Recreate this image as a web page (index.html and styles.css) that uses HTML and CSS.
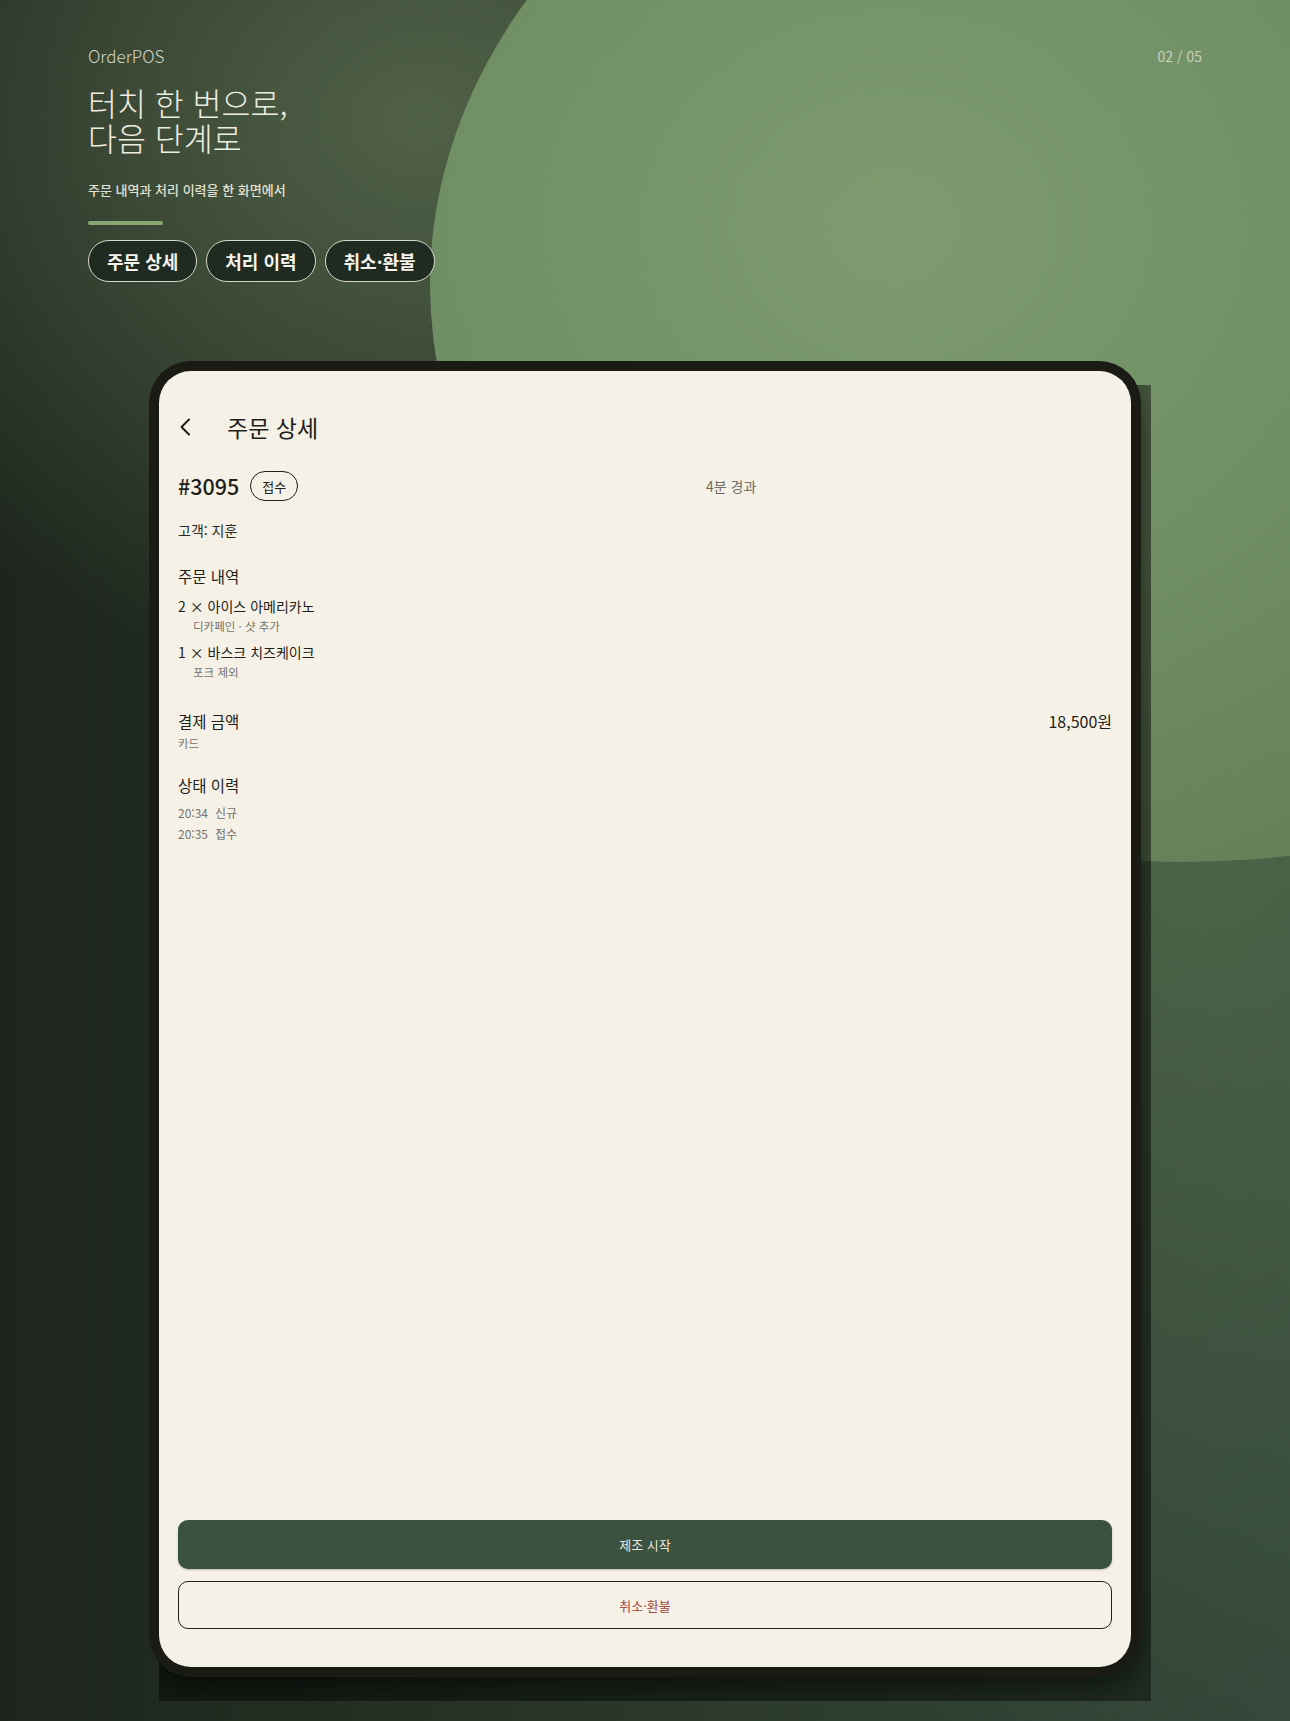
FILE: index.html
```html
<!DOCTYPE html>
<html lang="ko">
<head>
<meta charset="utf-8">
<title>OrderPOS</title>
<link rel="stylesheet" href="styles.css">
</head>
<body>
<div class="page">
  <div class="blob"></div>

  <header class="hero">
    <div class="topbar">
      <span class="brand">OrderPOS</span>
      <span class="counter">02 / 05</span>
    </div>
    <h1 class="headline">터치 한 번으로,<br>다음 단계로</h1>
    <p class="subtitle">주문 내역과 처리 이력을 한 화면에서</p>
    <div class="accent"></div>
    <div class="pills">
      <span class="pill">주문 상세</span>
      <span class="pill">처리 이력</span>
      <span class="pill">취소·환불</span>
    </div>
  </header>

  <div class="device-wrap">
    <div class="device-shadow"><div class="device-shadow-inner"></div></div>
    <div class="device">
      <div class="screen">
        <div class="nav">
          <svg class="back" width="14" height="18" viewBox="0 0 14 18" fill="none">
            <path d="M11 1.5 L3.5 9 L11 16.5" stroke="#1e1e1a" stroke-width="2" stroke-linecap="round" stroke-linejoin="round"/>
          </svg>
          <span class="nav-title">주문 상세</span>
        </div>

        <div class="order-head">
          <div class="order-id">
            <span class="order-no">#3095</span>
            <span class="badge">접수</span>
          </div>
          <span class="elapsed">4분 경과</span>
        </div>

        <div class="customer">고객: 지훈</div>

        <div class="section-title sec-items">주문 내역</div>
        <div class="item first">
          <div class="item-name">2 × 아이스 아메리카노</div>
          <div class="item-opt">디카페인 · 샷 추가</div>
        </div>
        <div class="item">
          <div class="item-name">1 × 바스크 치즈케이크</div>
          <div class="item-opt">포크 제외</div>
        </div>

        <div class="pay-row">
          <span class="section-title">결제 금액</span>
          <span class="amount">18,500원</span>
        </div>
        <div class="pay-method">카드</div>

        <div class="section-title sec-history">상태 이력</div>
        <ul class="history">
          <li><span class="time">20:34</span><span>신규</span></li>
          <li><span class="time">20:35</span><span>접수</span></li>
        </ul>

        <div class="actions">
          <button class="btn btn-primary">제조 시작</button>
          <button class="btn btn-outline">취소·환불</button>
        </div>
      </div>
    </div>
  </div>
</div>
</body>
</html>
```

FILE: styles.css
```css
* { box-sizing: border-box; }

html, body {
  margin: 0;
  padding: 0;
}

body {
  font-family: "Noto Sans CJK KR", "Noto Sans", sans-serif;
  background: #1f291f;
}

.page {
  position: relative;
  width: 1290px;
  height: 1721px;
  overflow: hidden;
  background:
    radial-gradient(ellipse 700px 560px at 420px 120px, rgba(82, 100, 73, 0.95) 0%, rgba(82, 100, 73, 0) 100%),
    radial-gradient(ellipse 760px 1000px at 1200px 800px, rgba(78, 103, 72, 0.95) 0%, rgba(78, 103, 72, 0) 100%),
    linear-gradient(90deg, #1d251c 0%, #222c21 20%, #2b3a2c 55%, #32463a 100%);
}

.blob {
  position: absolute;
  left: 430px;
  top: -294px;
  width: 1500px;
  height: 1156px;
  border-radius: 50%;
  background: radial-gradient(ellipse 55% 60% at 31% 45%, #7d9b6f 0%, #718f65 55%, #64815a 100%);
}

.hero {
  position: relative;
  z-index: 1;
  padding: 44px 88px 0;
}

.topbar {
  display: flex;
  justify-content: space-between;
  align-items: center;
  height: 24px;
}

.brand {
  font-size: 17px;
  font-weight: 300;
  color: #d3d6c9;
  line-height: 24px;
}

.counter {
  font-size: 14px;
  color: #c8d2bd;
  line-height: 24px;
}

.headline {
  margin: 17px 0 0;
  font-size: 31.5px;
  line-height: 35px;
  font-weight: 300;
  color: #efece2;
}

.subtitle {
  margin: 26px 0 0;
  font-size: 13px;
  line-height: 18px;
  font-weight: 500;
  color: #e2e0d4;
}

.accent {
  margin-top: 22px;
  width: 75px;
  height: 4px;
  border-radius: 2px;
  background: #86a874;
}

.pills {
  display: flex;
  gap: 9px;
  margin-top: 15px;
}

.pill {
  display: inline-flex;
  align-items: center;
  justify-content: center;
  height: 42px;
  padding: 0 18px;
  border: 1px solid #d8d6c8;
  border-radius: 21px;
  background: #1f2a21;
  color: #f4f2ea;
  font-size: 18px;
  font-weight: 700;
}

.device-wrap {
  position: relative;
  z-index: 1;
  width: 992px;
  height: 1316px;
  margin: 79px auto 0;
}

.device-shadow {
  position: absolute;
  left: 10px;
  top: 24px;
  width: 992px;
  height: 1316px;
  overflow: hidden;
  background: rgba(0, 0, 0, 0.38);
}

.device-shadow-inner {
  position: absolute;
  left: -10px;
  top: -24px;
  width: 992px;
  height: 1316px;
  border-radius: 42px;
  box-shadow: 0 10px 30px rgba(0, 0, 0, 0.55);
}

.device {
  position: relative;
  height: 100%;
  padding: 10px;
  border-radius: 42px;
  background: #1a1b14;
}

.screen {
  height: 100%;
  border-radius: 32px;
  background: #f5f1e7;
  padding: 34px 19px 38px;
  display: flex;
  flex-direction: column;
  color: #1e1e1a;
}

.nav {
  display: flex;
  align-items: center;
  height: 44px;
}

.back {
  display: block;
  flex: none;
}

.nav-title {
  margin-left: 35px;
  font-size: 23px;
  line-height: 30px;
  color: #1e1e1a;
}

.order-head {
  display: grid;
  grid-template-columns: 528px auto;
  align-items: center;
  height: 30px;
  margin-top: 22px;
}

.order-id {
  display: flex;
  align-items: center;
  gap: 11px;
}

.order-no {
  font-size: 21.5px;
  font-weight: 500;
  line-height: 30px;
}

.badge {
  display: inline-flex;
  align-items: center;
  height: 30px;
  padding: 0 11px;
  border: 1.5px solid #1e1e1a;
  border-radius: 15px;
  font-size: 13px;
}

.elapsed {
  font-size: 14px;
  color: #6f6d66;
  line-height: 20px;
}

.customer {
  margin-top: 19px;
  font-size: 14px;
  line-height: 20px;
  color: #2a2a25;
}

.section-title {
  font-size: 15.5px;
  font-weight: 400;
  line-height: 22px;
}

.sec-items { margin-top: 25px; }

.item { margin-top: 8px; }
.item.first { margin-top: 9px; }

.item-name {
  font-size: 14px;
  line-height: 20px;
}

.item-opt {
  margin-top: 2px;
  padding-left: 15px;
  font-size: 11.5px;
  line-height: 16px;
  color: #77746c;
}

.pay-row {
  display: flex;
  justify-content: space-between;
  align-items: center;
  margin-top: 30px;
}

.amount {
  font-size: 16px;
  line-height: 22px;
}

.pay-method {
  margin-top: 3px;
  font-size: 11.5px;
  line-height: 16px;
  color: #77746c;
}

.sec-history { margin-top: 23px; }

.history {
  list-style: none;
  margin: 9px 0 0;
  padding: 0;
}

.history li {
  display: flex;
  gap: 7px;
  font-size: 12px;
  line-height: 16px;
  color: #77746c;
}

.history li + li { margin-top: 5px; }

.actions {
  margin-top: auto;
  display: flex;
  flex-direction: column;
  gap: 12px;
}

.btn {
  display: block;
  width: 100%;
  height: 48px;
  border-radius: 10px;
  font-family: inherit;
  font-size: 13px;
}

.btn-primary {
  height: 49px;
  border: none;
  background: #3b5240;
  color: #ebe8de;
  box-shadow: 0 1px 2px rgba(0, 0, 0, 0.25);
}

.btn-outline {
  border: 1.5px solid #1e1e1a;
  background: transparent;
  color: #a2463b;
}
```
